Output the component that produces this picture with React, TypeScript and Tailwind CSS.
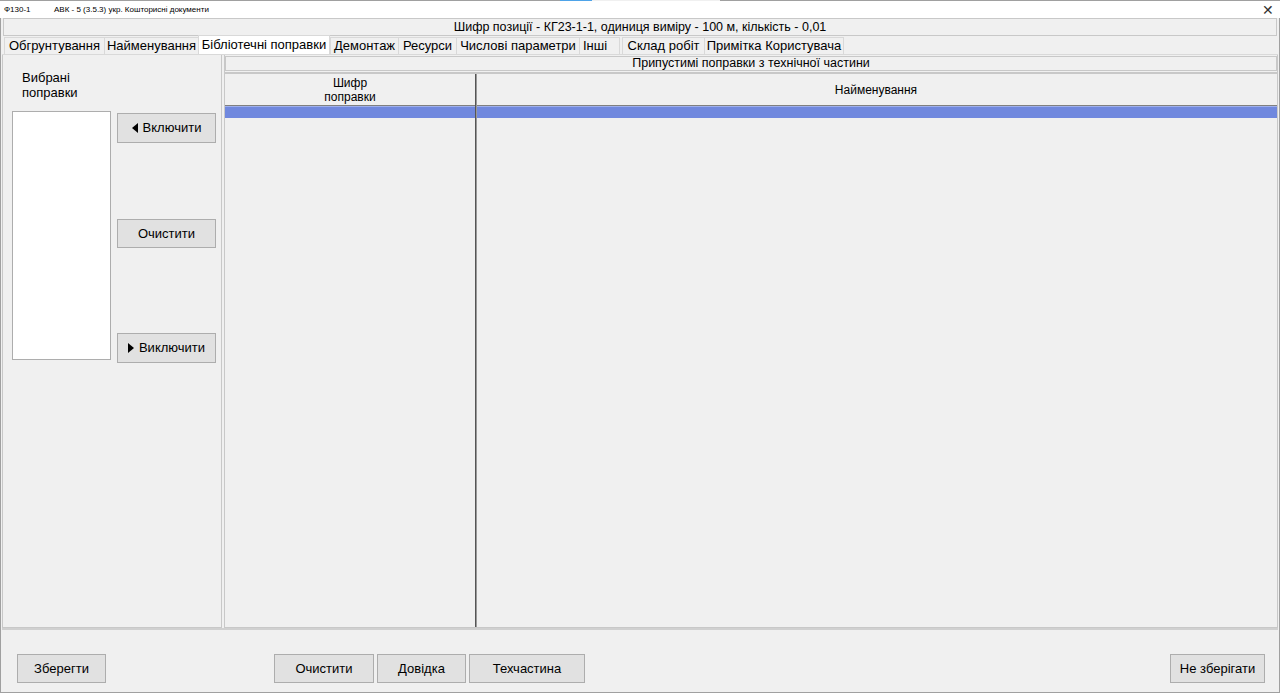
import React from "react";

const TABS = [
  { label: "Обгрунтування", w: 101 },
  { label: "Найменування", w: 95 },
  { label: "Бібліотечні поправки", w: 132, active: true },
  { label: "Демонтаж", w: 69 },
  { label: "Ресурси", w: 59 },
  { label: "Числові параметри", w: 124 },
  { label: "Інші", w: 41, left: true, gapAfter: true },
  { label: "Склад робіт", w: 83 },
  { label: "Примітка Користувача", w: 140 },
];

function WinButton({ children, className = "" }: { children: React.ReactNode; className?: string }) {
  return (
    <div
      className={`flex items-center justify-center border border-[#adadad] bg-[#e1e1e1] text-[13px] text-black ${className}`}
    >
      {children}
    </div>
  );
}

function Arrow({ dir }: { dir: "left" | "right" }) {
  return (
    <svg width="6" height="10" viewBox="0 0 6 10">
      {dir === "left" ? <polygon points="6,0 6,10 0,5" fill="#000" /> : <polygon points="0,0 0,10 6,5" fill="#000" />}
    </svg>
  );
}

export default function App() {
  return (
    <div
      className="w-[1280px] h-[693px] bg-[#f0f0f0] overflow-hidden flex flex-col text-black"
      style={{ fontFamily: '"Liberation Sans", Arial, sans-serif' }}
    >
      {/* title bar */}
      <div className="h-[18px] bg-white flex items-center relative shrink-0 border-t border-[#a0a0a0]">
        <div className="absolute left-[560px] top-[-1px] w-[32px] h-[1px] bg-[#4ea3e8]" />
        <div className="absolute left-[592px] top-[-1px] w-[128px] h-[1px] bg-[#f0f0f0]" />
        <span className="text-[8px] ml-[4px] w-[50px]">Ф130-1</span>
        <span className="text-[8px]">АВК - 5 (3.5.3) укр. Кошторисні документи</span>
        <span className="ml-auto mr-[6px] text-[14px] leading-none text-[#333]">✕</span>
      </div>

      <div className="flex-1 flex flex-col border-l border-r border-b border-[#a0a0a0] px-[1px]">
        {/* header */}
        <div className="h-[18px] mx-[1px] border border-[#c8c8c8] flex items-center justify-center text-[12.5px] shrink-0">
          Шифр позиції - КГ23-1-1, одиниця виміру - 100 м, кількість - 0,01
        </div>

        {/* tabs */}
        <div className="h-[19px] flex items-end pl-[2px] shrink-0 border-b border-[#d9d9d9]">
          {TABS.map((t) => (
            <React.Fragment key={t.label}>
              <div
                style={{ width: t.w }}
                className={
                  t.active
                    ? "h-[19px] bg-white border border-b-0 border-[#d9d9d9] text-[13px] flex items-center justify-center whitespace-nowrap"
                    : t.left
                    ? "h-[17px] bg-[#f0f0f0] border border-b-0 border-[#d9d9d9] text-[13px] flex items-center justify-start pl-[3px] whitespace-nowrap -mr-[1px]"
                    : "h-[17px] bg-[#f0f0f0] border border-b-0 border-[#d9d9d9] text-[13px] flex items-center justify-center whitespace-nowrap -mr-[1px]"
                }
              >
                {t.label}
              </div>
              {t.gapAfter && <div className="w-[3px]" />}
            </React.Fragment>
          ))}
        </div>

        {/* main content */}
        <div className="flex-1 flex min-h-0">
          {/* left panel */}
          <div className="w-[220px] border border-[#c8c8c8] border-t-0 flex flex-col">
            <div className="ml-[19px] mt-[15px] text-[13px] leading-[15px]">
              Вибрані
              <br />
              поправки
            </div>
            <div className="flex mt-[11px] ml-[9px]">
              <div className="w-[99px] h-[249px] bg-white border border-[#adadad]" />
              <div className="ml-[6px] relative w-[99px]">
                <WinButton className="absolute top-[2px] w-[99px] h-[30px] gap-[5px]">
                  <Arrow dir="left" />
                  <span>Включити</span>
                </WinButton>
                <WinButton className="absolute top-[108px] w-[99px] h-[29px]">Очистити</WinButton>
                <WinButton className="absolute top-[222px] w-[99px] h-[30px] gap-[5px]">
                  <Arrow dir="right" />
                  <span>Виключити</span>
                </WinButton>
              </div>
            </div>
          </div>

          {/* right panel */}
          <div className="flex-1 ml-[2px] flex flex-col border border-t-0 border-[#c8c8c8]">
            <div className="h-[15px] mt-[1px] border border-[#c8c8c8] flex items-center justify-center text-[12.5px] shrink-0">
              Припустимі поправки з технічної частини
            </div>
            <div className="flex-1 flex flex-col mt-[1px] border-t-2 border-[#c8c8c8] relative">
              <div className="h-[31px] flex shrink-0">
                <div className="w-[250px] flex flex-col items-center justify-center text-[12px] leading-[14px]">
                  <span>Шифр</span>
                  <span>поправки</span>
                </div>
                <div className="flex-1 flex items-center justify-center text-[12px]">Найменування</div>
              </div>
              <div className="h-[1px] bg-[#808080]" />
              <div className="h-[12px] bg-[#7088de] border-t border-[#9fb0ec]" />
              <div className="absolute left-[250px] top-0 bottom-0 w-[2px] bg-[#555] border-r border-[#999]" />
            </div>
          </div>
        </div>

        {/* bottom bar */}
        <div className="h-[64px] border-t-2 border-[#d0d0d0] shrink-0 relative">
          <WinButton className="absolute left-[15px] top-[24px] w-[89px] h-[29px]">Зберегти</WinButton>
          <WinButton className="absolute left-[272px] top-[24px] w-[100px] h-[29px]">Очистити</WinButton>
          <WinButton className="absolute left-[375px] top-[24px] w-[89px] h-[29px]">Довідка</WinButton>
          <WinButton className="absolute left-[467px] top-[24px] w-[116px] h-[29px]">Техчастина</WinButton>
          <WinButton className="absolute left-[1168px] top-[24px] w-[95px] h-[29px]">Не зберігати</WinButton>
        </div>
      </div>
    </div>
  );
}
